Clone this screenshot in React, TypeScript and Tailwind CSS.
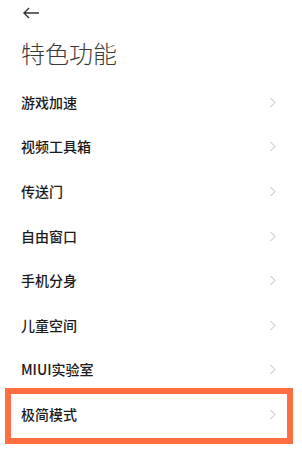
const items = [
  "游戏加速",
  "视频工具箱",
  "传送门",
  "自由窗口",
  "手机分身",
  "儿童空间",
  "MIUI实验室",
  "极简模式",
];

function Chevron() {
  return (
    <svg width="8" height="11" viewBox="0 0 8 11" fill="none">
      <path d="M1.5 1 L6 5.5 L1.5 10" stroke="#b8b8b8" strokeWidth="1" />
    </svg>
  );
}

export default function App() {
  return (
    <div
      className="w-[302px] h-[470px] bg-white overflow-hidden"
      style={{ fontFamily: '"Noto Sans CJK SC", "Noto Sans", sans-serif' }}
    >
      {/* back arrow */}
      <div className="h-[26px] pl-[22px] flex items-center">
        <svg width="18" height="12" viewBox="0 0 18 12" fill="none">
          <path d="M17 6 H2 M7 1 L2 6 L7 11" stroke="#333" strokeWidth="1.4" />
        </svg>
      </div>

      <div className="h-[54px] pl-[21px] flex items-center text-[24px] text-[#3a3a3a] font-light">
        特色功能
      </div>

      <div className="flex flex-col">
        {items.map((item, i) => (
          <div key={item} className="relative h-[44.6px] pl-[21px] pr-[25px] flex items-center justify-between">
            <span className="text-[14px] font-medium text-[#1a1a1a]">{item}</span>
            <Chevron />
            {i === items.length - 1 && (
              <div className="absolute left-[5px] w-[288px] top-[-4px] bottom-[-7px] border-[6px] border-[#ff6e40]" />
            )}
          </div>
        ))}
      </div>
    </div>
  );
}
